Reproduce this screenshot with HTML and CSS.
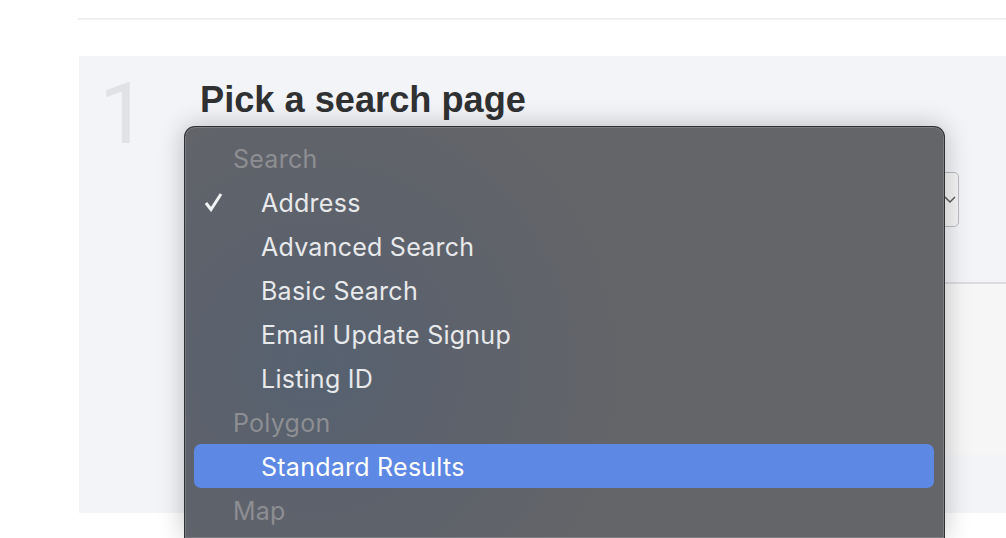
FILE: index.html

```html
<!DOCTYPE html>
<html lang="en">
<head>
  <meta charset="UTF-8">
  <title>Pick a search page</title>
  <meta name="viewport" content="width=device-width, initial-scale=1.0">
  <link rel="stylesheet" href="styles.css">
</head>
<body>

  <div class="rule"></div>

  <div class="panel">
    <div class="step-num">1</div>
    <div class="step-body">
      <h1>Pick a search page</h1>
      <div class="select-box">
        <svg class="chevron" width="14" height="10" viewBox="0 0 14 10"><path d="M2 2l5 5 5-5" fill="none" stroke="#555" stroke-width="1.4"/></svg>
      </div>
      <div class="card"></div>
    </div>
  </div>

  <div class="menu">
    <div class="group">Search</div>
    <div class="option">
      <svg class="check" width="20" height="20" viewBox="0 0 20 20"><path d="M2 11l5 6.5L17 2" fill="none" stroke="#f2f3f4" stroke-width="3"/></svg>
      Address
    </div>
    <div class="option">Advanced Search</div>
    <div class="option">Basic Search</div>
    <div class="option">Email Update Signup</div>
    <div class="option">Listing ID</div>
    <div class="group">Polygon</div>
    <div class="option highlighted">Standard Results</div>
    <div class="group">Map</div>
  </div>

</body>
</html>
```

FILE: styles.css

```css
body {
  margin: 0;
  padding: 0;
  height: 538px;
  overflow: hidden;
  background: #fff;
  font-family: 'Liberation Sans', sans-serif;
  position: relative;
}
.rule {
  height: 2px;
  margin: 18px 0 0 78px;
  background: #f0f0f2;
}
.panel {
  height: 457px;
  margin: 36px 0 0 79px;
  background: #f3f4f8;
  display: flex;
}
.step-num {
  width: 121px;
  padding: 14px 0 0 20px;
  box-sizing: border-box;
  font-family: Roboto, sans-serif;
  font-size: 86px;
  font-weight: 400;
  line-height: 88px;
  color: #e1e2e6;
}
.step-body {
  flex: 1;
}
h1 {
  margin: 24px 0 0 0;
  font-size: 36.2px;
  line-height: 40px;
  font-weight: bold;
  color: #303133;
}
.select-box {
  width: 759px;
  height: 55px;
  margin-top: 52px;
  box-sizing: border-box;
  border: 1.5px solid #bcbdc1;
  border-radius: 5px;
  background: #f5f5f6;
  display: flex;
  align-items: center;
  justify-content: flex-end;
  padding-right: 1px;
}
.card {
  height: 171px;
  margin-top: 55px;
  border-top: 2px solid #dcdcde;
  background: #f6f6f6;
}
.menu {
  position: absolute;
  left: 184px;
  top: 126px;
  width: 761px;
  height: 412px;
  box-sizing: border-box;
  padding: 9px 10px 0 9px;
  border: 1px solid #2f3033;
  border-bottom: none;
  border-radius: 11px 11px 0 0;
  background: radial-gradient(circle at 130px 240px, #566170 0, #5e626b 170px, #646568 330px);
  box-shadow: 0 0 26px rgba(0, 0, 0, 0.24), inset 0 0 0 1px rgba(255, 255, 255, 0.16);
  font-family: Inter, sans-serif;
  font-size: 25px;
  letter-spacing: 0.25px;
}
.group, .option {
  height: 44px;
  line-height: 46px;
  white-space: nowrap;
}
.group {
  padding-left: 39px;
  color: #8d8e92;
}
.option {
  position: relative;
  padding-left: 67px;
  color: #e8e9eb;
}
.highlighted {
  background: #5d88e3;
  border-radius: 7px;
  color: #fff;
}
.check {
  position: absolute;
  left: 10px;
  top: 12px;
}
```
